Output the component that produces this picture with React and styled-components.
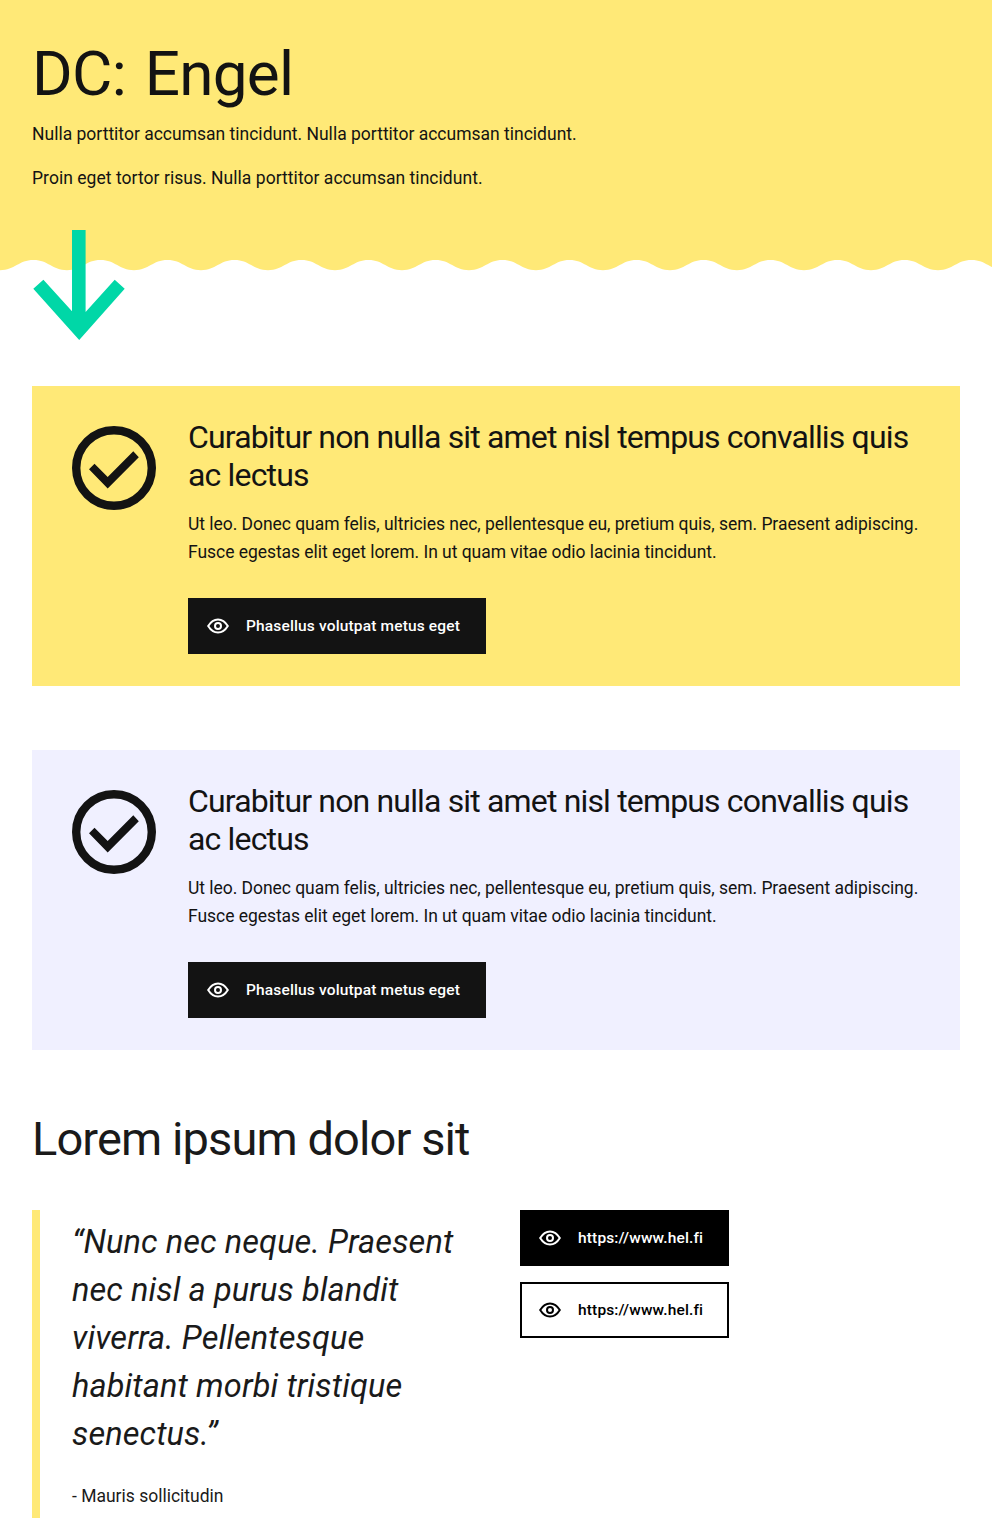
import React from "react";
import styled, { createGlobalStyle } from "styled-components";

const GlobalStyle = createGlobalStyle`
  *, *::before, *::after { box-sizing: border-box; }
  body {
    margin: 0;
    background: #fff;
    color: #1a1a1a;
    font-family: Roboto, "Liberation Sans", sans-serif;
    font-size: 17.5px;
    line-height: 28px;
  }
`;

const Hero = styled.header`
  height: 260px;
  padding: 36px 32px 0;
  background: #ffe977;
  color: #131313;
`;

const Title = styled.h1`
  margin: 0 0 8px;
  font-size: 62px;
  font-weight: 400;
  line-height: 76px;
  letter-spacing: -0.7px;
  word-spacing: 4px;
`;

const HeroText = styled.p`
  margin: 0 0 16px;

  & + & {
    letter-spacing: 0.04px;
  }
`;

const Wave = styled.svg`
  display: block;
  width: 100%;
  height: 11px;
`;

const Arrow = styled.svg`
  display: block;
  position: relative;
  width: 92px;
  height: 110px;
  margin: -41px 0 46px 33px;
  fill: #00d7a7;
`;

const Content = styled.main`
  padding: 0 32px;
`;

const Card = styled.section`
  display: flex;
  gap: 32px;
  height: 300px;
  padding: 32px 40px;
  margin-bottom: ${(p) => (p.$last ? 61 : 64)}px;
  background: ${(p) => p.$background};
  color: #131313;
`;

const CardIcon = styled.svg`
  flex: none;
  width: 84px;
  height: 84px;
  margin-top: 8px;
`;

const CardBody = styled.div`
  display: flex;
  flex-direction: column;
  align-items: flex-start;
  white-space: nowrap;
`;

const CardTitle = styled.h2`
  margin: 0 0 16px;
  font-size: 32px;
  font-weight: 400;
  line-height: 38px;
  letter-spacing: -0.84px;
`;

const CardText = styled.p`
  margin: 0 0 32px;
  letter-spacing: -0.045px;
`;

const SectionTitle = styled.h2`
  margin: 0 0 43px;
  font-size: 47px;
  font-weight: 400;
  line-height: 56px;
  letter-spacing: -0.9px;
`;

const Columns = styled.div`
  display: grid;
  grid-template-columns: 1fr 1fr;
  gap: 48px;
`;

const Quote = styled.figure`
  margin: 0;
  padding: 8px 0 8px 32px;
  border-left: 8px solid #ffe977;
`;

const QuoteText = styled.blockquote`
  margin: 0 0 24px;
  font-size: 32.5px;
  font-style: italic;
  line-height: 48px;
  letter-spacing: 0.11px;
  white-space: nowrap;
`;

const Links = styled.div`
  display: flex;
  flex-direction: column;
  align-items: flex-start;
  gap: 16px;
`;

const variants = {
  dark: "background: #131313; border-color: #131313; color: #fff;",
  black: "background: #000; border-color: #000; color: #fff;",
  outline: "background: #fff; border-color: #000; color: #000;",
};

const Button = styled.a`
  display: flex;
  align-items: center;
  gap: 16px;
  width: ${(p) => p.$width}px;
  height: 56px;
  padding-left: 16px;
  border: 2px solid;
  font-size: 15.5px;
  font-weight: 500;
  letter-spacing: 0.15px;
  text-decoration: none;
  white-space: nowrap;
  ${(p) => variants[p.$variant]}
`;

const Eye = styled.svg`
  flex: none;
  width: 24px;
  height: 24px;
  fill: none;
  stroke: currentColor;
  stroke-width: 2;
`;

function LinkButton({ variant, width, children }) {
  return (
    <Button href="#" $variant={variant} $width={width}>
      <Eye viewBox="0 0 24 24" aria-hidden="true">
        <path d="M2.2 12C4.6 8 8 5.5 12 5.5S19.4 8 21.8 12C19.4 16 16 18.5 12 18.5S4.6 16 2.2 12Z" />
        <circle cx="12" cy="12" r="3" />
      </Eye>
      <span>{children}</span>
    </Button>
  );
}

function LiftUp({ background, last }) {
  return (
    <Card $background={background} $last={last}>
      <CardIcon viewBox="0 0 84 84" aria-hidden="true">
        <circle cx="42" cy="42" r="37.8" fill="none" stroke="#131313" strokeWidth="8.4" />
        <path d="M17 43.3 22.5 37.8 35.7 51 61.3 25.2 66.8 31.2 35.7 62.6Z" fill="#131313" />
      </CardIcon>
      <CardBody>
        <CardTitle>
          Curabitur non nulla sit amet nisl tempus convallis quis
          <br />
          ac lectus
        </CardTitle>
        <CardText>
          Ut leo. Donec quam felis, ultricies nec, pellentesque eu, pretium quis, sem. Praesent adipiscing.
          <br />
          Fusce egestas elit eget lorem. In ut quam vitae odio lacinia tincidunt.
        </CardText>
        <LinkButton variant="dark" width={298}>Phasellus volutpat metus eget</LinkButton>
      </CardBody>
    </Card>
  );
}

export default function App() {
  return (
    <>
      <GlobalStyle />
      <Hero>
        <Title>DC: Engel</Title>
        <HeroText>Nulla porttitor accumsan tincidunt. Nulla porttitor accumsan tincidunt.</HeroText>
        <HeroText>Proin eget tortor risus. Nulla porttitor accumsan tincidunt.</HeroText>
      </Hero>
      <Wave aria-hidden="true">
        <defs>
          <pattern id="wave" width="67" height="11" patternUnits="userSpaceOnUse">
            <path
              d="M0 0V10.2C15 10.2 18.5 0 33.5 0S52 10.2 67 10.2V0Z"
              fill="#ffe977"
            />
          </pattern>
        </defs>
        <rect width="100%" height="11" fill="url(#wave)" />
      </Wave>
      <Arrow viewBox="0 0 92 110" aria-hidden="true">
        <path d="M39 0H52.6V82L81.7 49.7 91.7 58.7 46.2 110 .3 58.7 10.4 49.7 39 81.3Z" />
      </Arrow>
      <Content>
        <LiftUp background="#ffe977" />
        <LiftUp background="#f0f0ff" last />
        <SectionTitle>Lorem ipsum dolor sit</SectionTitle>
        <Columns>
          <Quote>
            <QuoteText>
              “Nunc nec neque. Praesent
              <br />
              nec nisl a purus blandit
              <br />
              viverra. Pellentesque
              <br />
              habitant morbi tristique
              <br />
              senectus.”
            </QuoteText>
            <figcaption>- Mauris sollicitudin</figcaption>
          </Quote>
          <Links>
            <LinkButton variant="black" width={209}>https://www.hel.fi</LinkButton>
            <LinkButton variant="outline" width={209}>https://www.hel.fi</LinkButton>
          </Links>
        </Columns>
      </Content>
    </>
  );
}
